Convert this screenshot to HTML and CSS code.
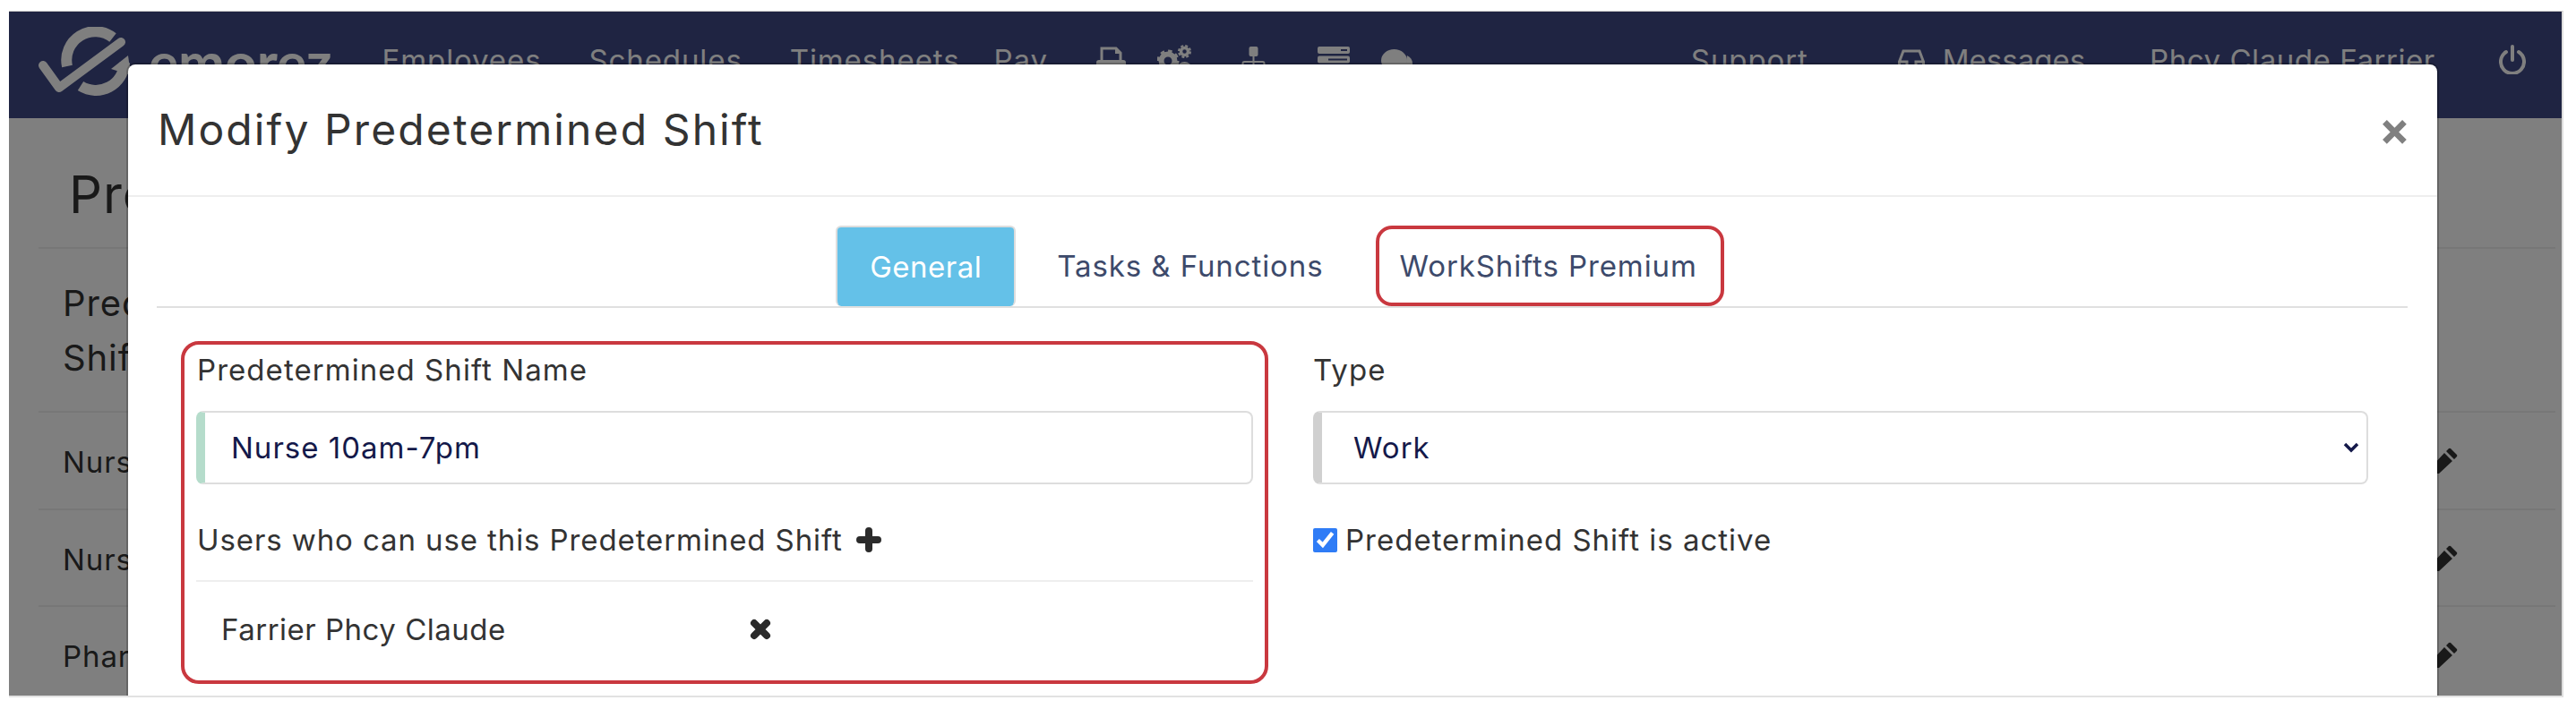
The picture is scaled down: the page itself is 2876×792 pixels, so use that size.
FILE: index.html
```html
<!DOCTYPE html>
<html>
<head>
    <title>Modify Predetermined Shift</title>
    <link rel="stylesheet" href="styles.css">
</head>
<body>
    <div class="window">
        <nav class="navbar">
            <svg class="logo" viewBox="43 30 102 78" fill="none" stroke="#fff">
                <path d="M75 74A32 32 0 0 1 126 42" stroke-width="12"/>
                <path d="M90 96A32 32 0 0 0 139 70" stroke-width="12"/>
                <path d="M124 77L143 62L146 84Z" fill="#fff" stroke="none"/>
                <path d="M48 73L66 98L135 47" stroke-width="10" stroke-linecap="round" stroke-linejoin="round"/>
            </svg>
            <span class="brand">emorez</span>
            <a class="nav-link employees">Employees</a>
            <a class="nav-link schedules">Schedules</a>
            <a class="nav-link timesheets">Timesheets</a>
            <a class="nav-link pay">Pay</a>
            <svg class="nav-icon printer" viewBox="0 0 33 30">
                <path d="M6 16V2H22L27 7V16" fill="none" stroke="#fff" stroke-width="3"/>
                <path d="M21 2L27 8H21Z" fill="#fff"/>
                <rect y="15" width="33" height="14" rx="3" fill="#fff"/>
            </svg>
            <svg class="nav-icon gears" viewBox="0 0 38 38" fill="none" stroke="#fff">
                <circle cx="12" cy="18" r="7.5" stroke-width="6"/>
                <circle cx="12" cy="18" r="11" stroke-width="3" stroke-dasharray="4.5 4.1"/>
                <circle cx="30.5" cy="7.5" r="4" stroke-width="3.5"/>
                <circle cx="30.5" cy="7.5" r="6.5" stroke-width="2" stroke-dasharray="3 2.1"/>
                <circle cx="30.5" cy="27" r="6.5" stroke-width="3"/>
            </svg>
            <svg class="nav-icon network" viewBox="0 0 27 30">
                <rect x="8.5" width="10" height="11" rx="2" fill="#fff"/>
                <path d="M13.5 10V30M1.5 30V19Q1.5 17 3.5 17H23.5Q25.5 17 25.5 19V30" fill="none" stroke="#fff" stroke-width="2"/>
            </svg>
            <svg class="nav-icon server" viewBox="0 0 36 20">
                <rect width="36" height="8" rx="2" fill="#fff"/>
                <rect y="10.5" width="36" height="8" rx="2" fill="#fff"/>
                <rect x="26" y="3" width="7" height="2" fill="#3e4884"/>
                <rect x="12" y="13.5" width="21" height="2" fill="#3e4884"/>
            </svg>
            <svg class="nav-icon comments" viewBox="0 0 35 28">
                <path d="M29 7C33 9 35 12 35 16C35 20 32 24 27 25Z" fill="#fff"/>
                <ellipse cx="14.5" cy="12.5" rx="14.5" ry="12.5" fill="#fff"/>
            </svg>
            <a class="nav-link support">Support</a>
            <svg class="nav-icon inbox" viewBox="0 0 30 30">
                <path d="M6 2H24L28.5 14V28H1.5V14ZM1.5 14H10V19H20V14H28.5" fill="none" stroke="#fff" stroke-width="3"/>
            </svg>
            <a class="nav-link messages">Messages</a>
            <a class="nav-link username">Phcy Claude Farrier</a>
            <svg class="nav-icon power" viewBox="0 0 30 33" fill="none" stroke="#fff" stroke-width="4" stroke-linecap="round">
                <path d="M15 2V17"/>
                <path d="M8 8A13 13 0 1 0 22 8"/>
            </svg>
        </nav>

        <div class="page">
            <h1 class="page-title">Predetermined Shifts</h1>
            <h3 class="list-head">Predetermined<br>Shifts</h3>
            <div class="list-row">Nurse 10am-7pm
                <svg class="pencil" viewBox="0 0 30 30"><path d="M21 2L28 9A2 2 0 0 1 28 11L25 14L16 5L19 2A2 2 0 0 1 21 2ZM14 7L23 16L8 30L0 30L0 22Z" fill="#333"/></svg>
            </div>
            <div class="list-row">Nurse 7am-4pm
                <svg class="pencil" viewBox="0 0 30 30"><path d="M21 2L28 9A2 2 0 0 1 28 11L25 14L16 5L19 2A2 2 0 0 1 21 2ZM14 7L23 16L8 30L0 30L0 22Z" fill="#333"/></svg>
            </div>
            <div class="list-row">Pharmacist<br>11:30am-8pm
                <svg class="pencil" viewBox="0 0 30 30"><path d="M21 2L28 9A2 2 0 0 1 28 11L25 14L16 5L19 2A2 2 0 0 1 21 2ZM14 7L23 16L8 30L0 30L0 22Z" fill="#333"/></svg>
            </div>
        </div>

        <div class="backdrop"></div>

        <div class="modal">
            <div class="modal-header">
                <h4 class="modal-title">Modify Predetermined Shift</h4>
                <span class="close">×</span>
            </div>
            <div class="modal-body">
                <div class="tabs">
                    <a class="tab active">General</a>
                    <a class="tab tasks">Tasks &amp; Functions</a>
                    <a class="tab marked">WorkShifts Premium</a>
                </div>
                <div class="form-row">
                    <div class="left-col">
                        <label class="form-label">Predetermined Shift Name</label>
                        <input class="form-input" type="text" value="Nurse 10am-7pm">
                        <div class="users-title">Users who can use this Predetermined Shift
                            <svg class="plus" viewBox="0 0 28 28"><path d="M14 4V24M4 14H24" stroke="#2b2b2b" stroke-width="8" stroke-linecap="round"/></svg>
                        </div>
                        <div class="user-row">
                            <span class="user-name">Farrier Phcy Claude</span>
                            <svg class="remove" viewBox="0 0 24 24"><path d="M5 5L19 19M19 5L5 19" stroke="#2b2b2b" stroke-width="8" stroke-linecap="round"/></svg>
                        </div>
                    </div>
                    <div class="right-col">
                        <label class="form-label">Type</label>
                        <div class="select-wrap">
                            <select class="form-select"><option>Work</option></select>
                            <svg class="chevron" viewBox="0 0 18 12"><path d="M2 2L9 9L16 2" fill="none" stroke="#14194a" stroke-width="3.5"/></svg>
                        </div>
                        <label class="check-row">
                            <input class="check" type="checkbox" checked>
                            <span>Predetermined Shift is active</span>
                        </label>
                    </div>
                </div>
            </div>
        </div>
    </div>
</body>
</html>
```

FILE: styles.css
```css
* {
    box-sizing: border-box;
}

body {
    margin: 0;
    padding: 12px 14px 0 10px;
    background-color: #fff;
    font-family: "Inter", "Liberation Sans", sans-serif;
    font-size: 33px;
    letter-spacing: 0.9px;
    color: #333;
}

.window {
    position: relative;
    height: 767px;
    overflow: hidden;
    border-top: 1px solid #c8c8c8;
    border-right: 2px solid #ddd;
    border-bottom: 2px solid #e2e2e2;
    background-color: #fff;
}

.navbar {
    display: flex;
    align-items: flex-start;
    height: 119px;
    padding: 17px 0 0 33px;
    background-color: #3e4884;
    color: #fff;
}

.logo {
    width: 102px;
    height: 78px;
}

.brand {
    margin: 2px 0 0 21px;
    font-family: "Lato", sans-serif;
    font-size: 62px;
    font-weight: 700;
    letter-spacing: 0;
    line-height: 72px;
}

.nav-link {
    margin-top: 17px;
    line-height: 40px;
    white-space: nowrap;
}

.nav-icon {
    flex: none;
}

.employees { margin-left: 56px; }
.schedules { margin-left: 53px; }
.timesheets { margin-left: 53px; }
.pay { margin-left: 38px; }

.printer { width: 33px; height: 30px; margin: 22px 0 0 54px; }
.gears { width: 38px; height: 38px; margin: 20px 0 0 35px; }
.network { width: 27px; height: 30px; margin: 22px 0 0 56px; }
.server { width: 36px; height: 20px; margin: 22px 0 0 58px; }
.comments { width: 35px; height: 28px; margin: 25px 0 0 35px; }

.support { margin-left: 311px; }
.inbox { width: 30px; height: 30px; margin: 25px 0 0 100px; }
.messages { margin-left: 20px; letter-spacing: 0; }
.username { margin-left: 72px; letter-spacing: 0.55px; }
.power { width: 30px; height: 33px; margin: 20px 0 0 71px; }

.page {
    padding: 0 7px 0 33px;
    color: #333;
}

.page-title {
    height: 146px;
    margin: 0;
    padding: 50px 0 0 34px;
    border-bottom: 2px solid #eee;
    font-size: 58px;
    font-weight: 400;
    line-height: 70px;
}

.list-head {
    height: 183px;
    margin: 0;
    padding: 30px 0 0 27px;
    border-bottom: 2px solid #eee;
    font-size: 40px;
    font-weight: 400;
    line-height: 61px;
}

.list-row {
    position: relative;
    height: 108.5px;
    padding: 27px 0 0 27px;
    border-bottom: 2px solid #eee;
    line-height: 56px;
}

.pencil {
    position: absolute;
    top: 38px;
    right: 108px;
    width: 30px;
    height: 30px;
}

.backdrop {
    position: absolute;
    inset: 0;
    background-color: rgba(0, 0, 0, 0.5);
}

.modal {
    position: absolute;
    top: 57px;
    left: 131px;
    width: 2582px;
    height: 722px;
    border: 2px solid rgba(0, 0, 0, 0.2);
    border-radius: 10px;
    background-color: #fff;
    background-clip: padding-box;
}

.modal-header {
    display: flex;
    justify-content: space-between;
    align-items: center;
    height: 148px;
    padding: 0 29px 2px 33px;
    border-bottom: 2px solid #eee;
}

.modal-title {
    margin: 0;
    font-size: 48px;
    font-weight: 400;
    letter-spacing: 2.1px;
}

.close {
    font-size: 52px;
    font-weight: 700;
    line-height: 1;
    color: #808080;
}

.modal-body {
    padding: 32px 33px 0 32px;
}

.tabs {
    display: flex;
    justify-content: center;
    height: 92px;
    padding-right: 5px;
    border-bottom: 2px solid #e0e0e0;
}

.tab {
    height: 90px;
    line-height: 90px;
    color: #3d4a6b;
}

.tab.active {
    padding: 0 36px;
    border: 2px solid #ddd;
    border-bottom: none;
    border-radius: 6px;
    background-color: #64c1e8;
    line-height: 88px;
    letter-spacing: 0.5px;
    color: #fff;
}

.tab.tasks {
    margin-left: 46px;
}

.tab.marked {
    margin-left: 59px;
    padding: 0 26px 0 22px;
    border: 4px solid #c9383f;
    border-radius: 18px;
    line-height: 82px;
}

.form-row {
    display: flex;
    margin-top: 37px;
    padding-left: 27px;
}

.left-col {
    width: 1214px;
    height: 383px;
    padding: 0 13px;
    border: 4px solid #c9383f;
    border-radius: 20px;
}

.right-col {
    width: 1178px;
    margin-left: 50px;
    padding-top: 4px;
}

.form-label {
    display: block;
    margin-bottom: 18px;
    padding-left: 1px;
    line-height: 56px;
    letter-spacing: 1.05px;
}

.right-col .form-label {
    padding-left: 0;
}

.form-input,
.form-select {
    display: block;
    width: 100%;
    height: 82px;
    padding: 0 0 0 29px;
    border: 2px solid #ddd;
    border-left: 10px solid #b5dccb;
    border-radius: 8px;
    outline: none;
    background-color: #fff;
    font-family: inherit;
    font-size: 33px;
    letter-spacing: 1px;
    color: #14194a;
}

.select-wrap {
    position: relative;
}

.form-select {
    padding-left: 35px;
    border-left-color: #d0d0d0;
    appearance: none;
}

.chevron {
    position: absolute;
    top: 35px;
    right: 10px;
    width: 18px;
    height: 12px;
}

.users-title {
    display: flex;
    align-items: center;
    margin-top: 34px;
    padding-left: 1px;
    line-height: 56px;
}

.plus {
    width: 28px;
    height: 28px;
    margin-left: 15px;
}

.user-row {
    display: flex;
    align-items: center;
    height: 108px;
    margin-top: 17px;
    padding-left: 28px;
    border-top: 2px solid #eee;
}

.user-name {
    width: 590px;
    letter-spacing: 0.5px;
}

.remove {
    width: 24px;
    height: 24px;
}

.check-row {
    display: flex;
    align-items: center;
    margin-top: 34px;
    line-height: 56px;
    letter-spacing: 1px;
}

.check {
    width: 27px;
    height: 27px;
    margin: 0 9px 0 0;
    accent-color: #2f7cf6;
}
```
